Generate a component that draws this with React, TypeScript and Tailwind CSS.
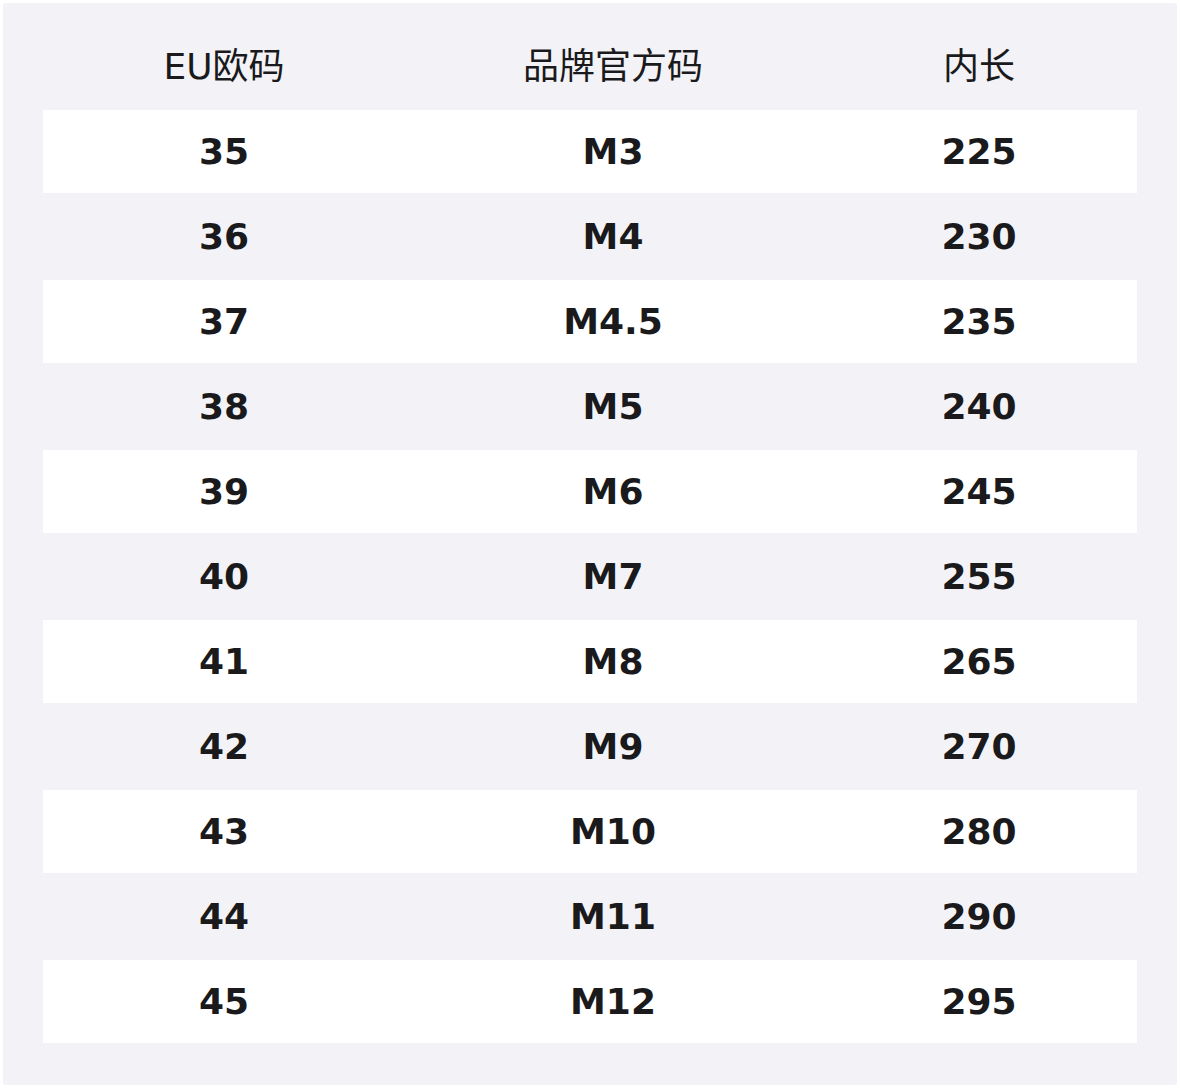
import React from "react";

const rows: [string, string, string][] = [
  ["35", "M3", "225"],
  ["36", "M4", "230"],
  ["37", "M4.5", "235"],
  ["38", "M5", "240"],
  ["39", "M6", "245"],
  ["40", "M7", "255"],
  ["41", "M8", "265"],
  ["42", "M9", "270"],
  ["43", "M10", "280"],
  ["44", "M11", "290"],
  ["45", "M12", "295"],
];

const font = {
  fontFamily: '"DejaVu Sans", "Noto Sans CJK SC", sans-serif',
};

export default function App() {
  return (
    <div className="w-[1180px] h-[1088px] bg-white p-[3px]" style={font}>
      <div className="bg-[#f3f3f7] rounded-[3px] px-10 pt-[21px] pb-[41px] text-[#1a1a1c]">
        <div className="grid grid-cols-[362px_416px_316px] h-[85px] items-center text-[36px] leading-none">
          <div className="text-center">EU欧码</div>
          <div className="text-center">品牌官方码</div>
          <div className="text-center">内长</div>
        </div>
        {rows.map((r, i) => (
          <div key={i} className="h-[85px] py-[1px]">
            <div
              className={`grid grid-cols-[362px_416px_316px] h-full items-center text-[36px] font-bold leading-none ${
                i % 2 === 0 ? "bg-white" : ""
              }`}
            >
              <div className="text-center">{r[0]}</div>
              <div className="text-center">{r[1]}</div>
              <div className="text-center">{r[2]}</div>
            </div>
          </div>
        ))}
      </div>
    </div>
  );
}
